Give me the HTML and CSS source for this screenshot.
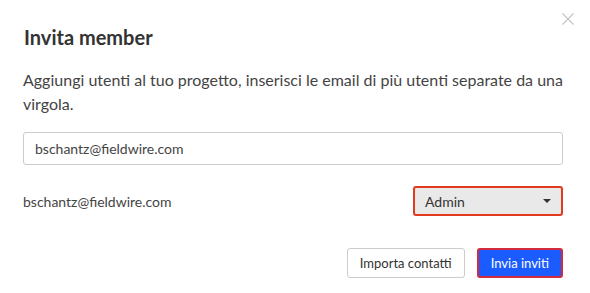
FILE: index.html
```html
<!DOCTYPE html>
<html lang="it">
<head>
    <meta charset="UTF-8">
    <meta name="viewport" content="width=device-width, initial-scale=1.0">
    <title>Invita member</title>
    <link rel="stylesheet" href="styles.css">
</head>
<body>

    <div class="modal">
        <button class="close" aria-label="Chiudi">
            <svg width="12" height="12" viewBox="0 0 12 12"><path d="M0.5 0.5 L11.5 11.5 M11.5 0.5 L0.5 11.5" stroke="#c4c4c4" stroke-width="1.2" fill="none"/></svg>
        </button>
        <h1>Invita member</h1>
        <p class="intro">Aggiungi utenti al tuo progetto, inserisci le email di più utenti separate da una virgola.</p>

        <input type="text" class="emails" value="bschantz@fieldwire.com">

        <div class="member">
            <span class="member-email">bschantz@fieldwire.com</span>
            <div class="role">
                <span>Admin</span>
                <span class="caret"></span>
            </div>
        </div>

        <div class="actions">
            <button class="btn">Importa contatti</button>
            <button class="btn primary">Invia inviti</button>
        </div>
    </div>

</body>
</html>
```

FILE: styles.css
```css
body {
    margin: 0;
    background: #fff;
    font-family: Lato, "Open Sans", sans-serif;
    color: #333;
}
.modal {
    position: relative;
    padding: 25px 27px 14px 24px;
}
.close {
    position: absolute;
    top: 13px;
    right: 16px;
    background: none;
    border: none;
    padding: 0;
    cursor: pointer;
}
h1 {
    margin: 0;
    font-size: 20px;
    font-weight: 700;
    line-height: 24px;
    color: #333;
}
.intro {
    margin: 19px 0 0 -1px;
    font-size: 16px;
    line-height: 24px;
    color: #444;
}
.emails {
    display: block;
    box-sizing: border-box;
    width: calc(100% + 1px);
    height: 33px;
    margin: 16px 0 0 -1px;
    padding: 0 11px;
    border: 1px solid #ccc;
    border-radius: 3px;
    font-family: inherit;
    font-size: 14px;
    color: #444;
}
.member {
    display: flex;
    align-items: center;
    justify-content: space-between;
    margin: 21px 0 0 -1px;
    font-size: 14px;
}
.member-email {
    color: #444;
}
.role {
    box-sizing: border-box;
    width: 150px;
    height: 30px;
    display: flex;
    align-items: center;
    justify-content: space-between;
    padding: 0 10px 0 10px;
    background: #e9e9e9;
    border: 2px solid #e2391f;
    border-radius: 3px;
    font-size: 14px;
    color: #333;
}
.caret {
    width: 0;
    height: 0;
    border-left: 4px solid transparent;
    border-right: 4px solid transparent;
    border-top: 4px solid #333;
}
.actions {
    display: flex;
    justify-content: flex-end;
    gap: 12px;
    margin-top: 32px;
}
.btn {
    height: 30px;
    padding: 0 12px;
    background: #fff;
    border: 1px solid #ccc;
    border-radius: 3px;
    font-family: inherit;
    font-size: 13px;
    color: #333;
    cursor: pointer;
}
.btn.primary {
    background: #1a5cff;
    border: 2px solid #d42a3a;
    color: #fff;
}
```
